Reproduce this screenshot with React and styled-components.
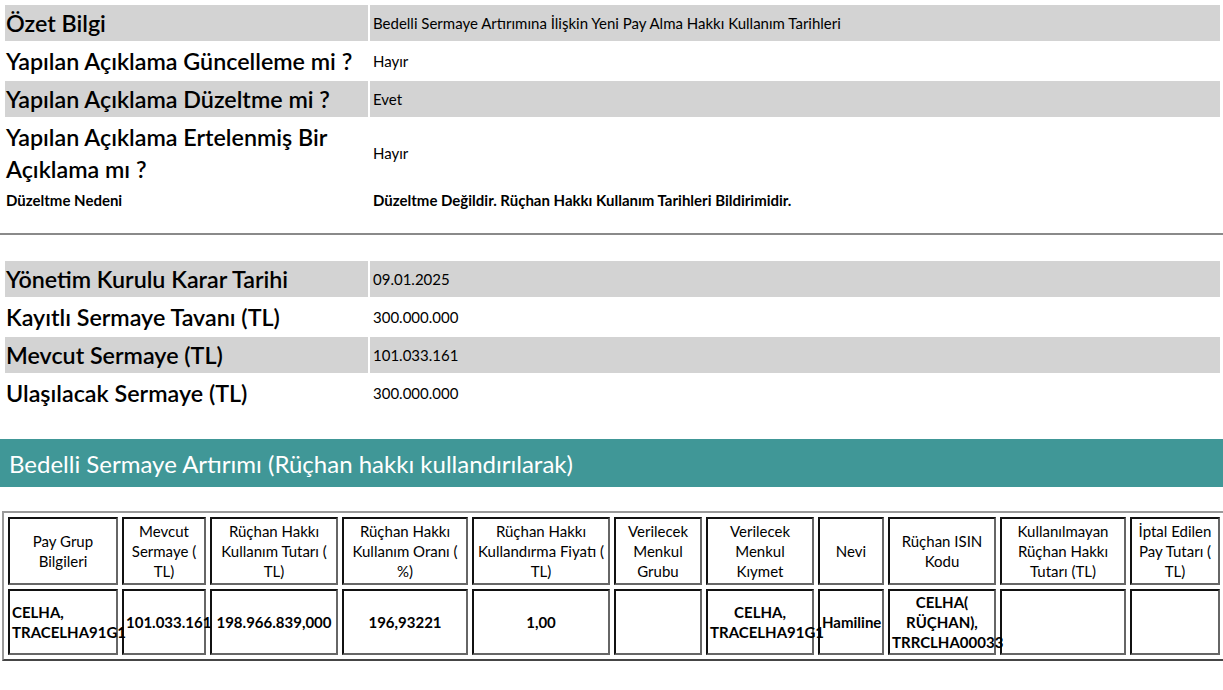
import React from 'react';
import styled, { createGlobalStyle } from 'styled-components';

const Global = createGlobalStyle`
  body { margin: 0; background: #fff; font-family: Lato, "Open Sans", sans-serif; color: #000; }
`;

const summary = [
  { label: 'Özet Bilgi', value: 'Bedelli Sermaye Artırımına İlişkin Yeni Pay Alma Hakkı Kullanım Tarihleri', grey: true },
  { label: 'Yapılan Açıklama Güncelleme mi ?', value: 'Hayır' },
  { label: 'Yapılan Açıklama Düzeltme mi ?', value: 'Evet', grey: true },
  { label: 'Yapılan Açıklama Ertelenmiş Bir Açıklama mı ?', value: 'Hayır' },
];

const capital = [
  { label: 'Yönetim Kurulu Karar Tarihi', value: '09.01.2025', grey: true },
  { label: 'Kayıtlı Sermaye Tavanı (TL)', value: '300.000.000' },
  { label: 'Mevcut Sermaye (TL)', value: '101.033.161', grey: true },
  { label: 'Ulaşılacak Sermaye (TL)', value: '300.000.000' },
];

const cols = [
  ['Pay Grup Bilgileri', 'CELHA, TRACELHA91G1', 110, 'left'],
  ['Mevcut Sermaye ( TL)', '101.033.161', 84],
  ['Rüçhan Hakkı Kullanım Tutarı ( TL)', '198.966.839,000', 128],
  ['Rüçhan Hakkı Kullanım Oranı ( %)', '196,93221', 126],
  ['Rüçhan Hakkı Kullandırma Fiyatı ( TL)', '1,00', 138],
  ['Verilecek Menkul Grubu', '', 88],
  ['Verilecek Menkul Kıymet', 'CELHA, TRACELHA91G1', 108],
  ['Nevi', 'Hamiline', 66],
  ['Rüçhan ISIN Kodu', 'CELHA( RÜÇHAN), TRRCLHA00033', 108],
  ['Kullanılmayan Rüçhan Hakkı Tutarı (TL)', '', 126],
  ['İptal Edilen Pay Tutarı ( TL)', '', 90],
];

const Page = styled.div`
  padding: 5px 3px 0 0;
`;

const InfoGrid = styled.div`
  display: grid;
  grid-template-columns: 363px 1fr;
  column-gap: 2px;
  row-gap: 2px;
  margin-left: 5px;
`;

const Label = styled.div`
  background: ${p => (p.$grey ? '#d3d3d3' : 'transparent')};
  font-size: 23.3px;
  font-weight: 600;
  line-height: 32px;
  padding: 2px 0 2px 1px;
  min-height: 32px;
`;

const Value = styled.div`
  background: ${p => (p.$grey ? '#d3d3d3' : 'transparent')};
  font-size: 15px;
  display: flex;
  align-items: center;
  padding-left: 3px;
`;

const SmallLabel = styled.div`
  font-size: 15px;
  font-weight: 700;
  padding: 2px 1px;
`;

const SmallValue = styled.div`
  font-size: 15px;
  font-weight: 700;
  padding: 2px 3px;
`;

const Divider = styled.hr`
  border: none;
  border-top: 2px solid #8a8a8a;
  margin: 22px 0 26px 0;
  width: 1223px;
`;

const Banner = styled.div`
  background: #409797;
  color: #fff;
  font-size: 24px;
  height: 48px;
  display: flex;
  align-items: center;
  padding-left: 9px;
  margin-top: 28px;
  width: 1214px;
`;

const Table = styled.table`
  margin: 24px 0 0 2px;
  border: 2px outset #999;
  border-spacing: 4px 4px;
  font-size: 15px;
  table-layout: fixed;
  width: 1221px;
`;

const Th = styled.td`
  box-sizing: border-box;
  border: 2px inset #666;
  text-align: center;
  vertical-align: middle;
  height: 68px;
  padding: 0 2px;
  line-height: 20px;
  font-weight: 400;
`;

const Td = styled(Th)`
  font-weight: 700;
  text-align: ${p => p.$align || 'center'};
  height: 66px;
`;

export default function App() {
  return (
    <Page>
      <Global />
      <InfoGrid>
        {summary.map(r => (
          <React.Fragment key={r.label}>
            <Label $grey={r.grey}>{r.label}</Label>
            <Value $grey={r.grey}>{r.value}</Value>
          </React.Fragment>
        ))}
        <SmallLabel>Düzeltme Nedeni</SmallLabel>
        <SmallValue>Düzeltme Değildir. Rüçhan Hakkı Kullanım Tarihleri Bildirimidir.</SmallValue>
      </InfoGrid>
      <Divider />
      <InfoGrid>
        {capital.map(r => (
          <React.Fragment key={r.label}>
            <Label $grey={r.grey}>{r.label}</Label>
            <Value $grey={r.grey}>{r.value}</Value>
          </React.Fragment>
        ))}
      </InfoGrid>
      <Banner>Bedelli Sermaye Artırımı (Rüçhan hakkı kullandırılarak)</Banner>
      <Table>
        <colgroup>
          {cols.map(c => (
            <col key={c[0]} style={{ width: c[2] }} />
          ))}
        </colgroup>
        <tbody>
          <tr>
            {cols.map(c => (
              <Th key={c[0]}>{c[0]}</Th>
            ))}
          </tr>
          <tr>
            {cols.map(c => (
              <Td key={c[0]} $align={c[3]}>{c[1]}</Td>
            ))}
          </tr>
        </tbody>
      </Table>
    </Page>
  );
}
